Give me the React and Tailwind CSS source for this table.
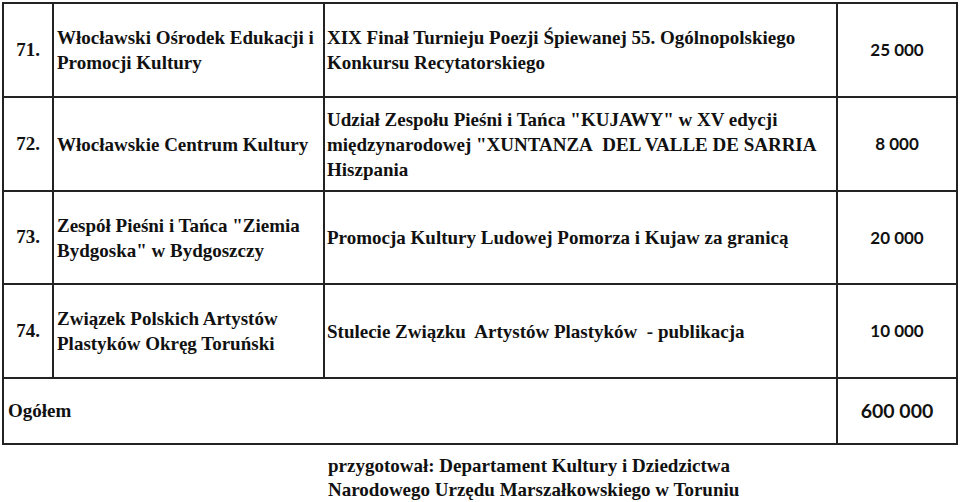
import React from "react";

const serif = { fontFamily: '"Liberation Serif", "Times New Roman", serif' };
const sans = { fontFamily: 'Lato, "Open Sans", sans-serif' };

const rows = [
  {
    no: "71.",
    name: ["Włocławski Ośrodek Edukacji i", "Promocji Kultury"],
    desc: ["XIX Finał Turnieju Poezji Śpiewanej 55. Ogólnopolskiego", "Konkursu Recytatorskiego"],
    amount: "25 000",
    h: "h-[92px]",
  },
  {
    no: "72.",
    name: ["Włocławskie Centrum Kultury"],
    desc: [
      'Udział Zespołu Pieśni i Tańca "KUJAWY" w XV edycji',
      'międzynarodowej "XUNTANZA\u00a0 DEL VALLE DE SARRIA',
      "Hiszpania",
    ],
    amount: "8 000",
    h: "h-[92px]",
  },
  {
    no: "73.",
    name: ['Zespół Pieśni i Tańca "Ziemia', 'Bydgoska" w Bydgoszczy'],
    desc: ["Promocja Kultury Ludowej Pomorza i Kujaw za granicą"],
    amount: "20 000",
    h: "h-[91px]",
  },
  {
    no: "74.",
    name: ["Związek Polskich Artystów", "Plastyków Okręg Toruński"],
    desc: ["Stulecie Związku\u00a0 Artystów Plastyków\u00a0 - publikacja"],
    amount: "10 000",
    h: "h-[92px]",
  },
];

export default function App() {
  return (
    <div className="w-[960px] h-[502px] bg-white text-[#111] overflow-hidden">
      <div className="pt-[2px] pl-[2px]">
        <div
          className="grid grid-cols-[48px_269px_511px_118px] gap-[2px] p-[2px] bg-[#232323] w-[956px]"
          style={serif}
        >
          {rows.map((r) => (
            <React.Fragment key={r.no}>
              <div className={`bg-white ${r.h} flex items-center justify-center text-[19px] font-bold`}>
                {r.no}
              </div>
              <div className={`bg-white ${r.h} flex flex-col justify-center pl-[3px] text-[19px] font-bold leading-[25px] whitespace-nowrap`}>
                {r.name.map((l) => (
                  <div key={l}>{l}</div>
                ))}
              </div>
              <div className={`bg-white ${r.h} flex flex-col justify-center pl-[2px] text-[19px] font-bold leading-[25px] whitespace-nowrap`}>
                {r.desc.map((l) => (
                  <div key={l}>{l}</div>
                ))}
              </div>
              <div
                className={`bg-white ${r.h} flex items-center justify-center text-[17px] font-bold`}
                style={sans}
              >
                {r.amount}
              </div>
            </React.Fragment>
          ))}
          <div className="col-span-3 bg-white h-[64px] flex items-center pl-[4px] text-[19px] font-bold">
            Ogółem
          </div>
          <div
            className="bg-white h-[64px] flex items-center justify-center text-[19.5px] font-bold"
            style={sans}
          >
            600 000
          </div>
        </div>
      </div>
      <div className="mt-[9px] pl-[328px] text-[19px] font-bold leading-[24px]" style={serif}>
        <div>przygotował: Departament Kultury i Dziedzictwa</div>
        <div>Narodowego Urzędu Marszałkowskiego w Toruniu</div>
      </div>
    </div>
  );
}
